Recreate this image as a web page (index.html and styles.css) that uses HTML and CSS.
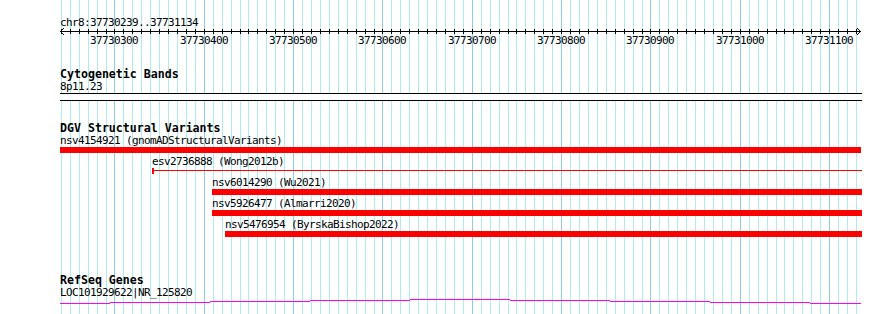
FILE: index.html
```html
<!DOCTYPE html>
<html lang="en">
  <head>
    <meta charset="UTF-8" />
    <title>chr8:37730239..37731134</title>
    <link rel="stylesheet" href="styles.css">
  </head>
  <body>
    <div class="browser">
      <!-- 10 bp grid, drawn behind the tracks -->
      <svg class="grid" width="890" height="314" viewBox="0 0 890 314" shape-rendering="crispEdges">
        <path class="grid-minor" d="M61.5 0V314M70.5 0V314M79.5 0V314M88.5 0V314M97.5 0V314M106.5 0V314M123.5 0V314M132.5 0V314M141.5 0V314M150.5 0V314M159.5 0V314M168.5 0V314M177.5 0V314M186.5 0V314M195.5 0V314M213.5 0V314M222.5 0V314M231.5 0V314M240.5 0V314M248.5 0V314M257.5 0V314M266.5 0V314M275.5 0V314M284.5 0V314M302.5 0V314M311.5 0V314M320.5 0V314M329.5 0V314M338.5 0V314M347.5 0V314M356.5 0V314M365.5 0V314M374.5 0V314M391.5 0V314M400.5 0V314M409.5 0V314M418.5 0V314M427.5 0V314M436.5 0V314M445.5 0V314M454.5 0V314M463.5 0V314M481.5 0V314M490.5 0V314M499.5 0V314M508.5 0V314M516.5 0V314M525.5 0V314M534.5 0V314M543.5 0V314M552.5 0V314M570.5 0V314M579.5 0V314M588.5 0V314M597.5 0V314M606.5 0V314M615.5 0V314M624.5 0V314M633.5 0V314M642.5 0V314M659.5 0V314M668.5 0V314M677.5 0V314M686.5 0V314M695.5 0V314M704.5 0V314M713.5 0V314M722.5 0V314M731.5 0V314M749.5 0V314M758.5 0V314M767.5 0V314M776.5 0V314M784.5 0V314M793.5 0V314M802.5 0V314M811.5 0V314M820.5 0V314M838.5 0V314M847.5 0V314M856.5 0V314"/>
        <path class="grid-major" d="M114.5 0V314M204.5 0V314M293.5 0V314M382.5 0V314M472.5 0V314M561.5 0V314M650.5 0V314M740.5 0V314M829.5 0V314"/>
      </svg>

      <div class="tracks">
        <section class="ruler">
          <div class="small chrom">chr8:37730239..37731134</div>
          <svg class="axis" width="802" height="5" viewBox="60 29 802 5" shape-rendering="crispEdges">
            <path d="M60 31.5H861"/>
            <path d="M61.5 29v5M70.5 29v5M79.5 29v5M88.5 29v5M97.5 29v5M106.5 29v5M114.5 29v5M123.5 29v5M132.5 29v5M141.5 29v5M150.5 29v5M159.5 29v5M168.5 29v5M177.5 29v5M186.5 29v5M195.5 29v5M204.5 29v5M213.5 29v5M222.5 29v5M231.5 29v5M240.5 29v5M248.5 29v5M257.5 29v5M266.5 29v5M275.5 29v5M284.5 29v5M293.5 29v5M302.5 29v5M311.5 29v5M320.5 29v5M329.5 29v5M338.5 29v5M347.5 29v5M356.5 29v5M365.5 29v5M374.5 29v5M382.5 29v5M391.5 29v5M400.5 29v5M409.5 29v5M418.5 29v5M427.5 29v5M436.5 29v5M445.5 29v5M454.5 29v5M463.5 29v5M472.5 29v5M481.5 29v5M490.5 29v5M499.5 29v5M508.5 29v5M516.5 29v5M525.5 29v5M534.5 29v5M543.5 29v5M552.5 29v5M561.5 29v5M570.5 29v5M579.5 29v5M588.5 29v5M597.5 29v5M606.5 29v5M615.5 29v5M624.5 29v5M633.5 29v5M642.5 29v5M650.5 29v5M659.5 29v5M668.5 29v5M677.5 29v5M686.5 29v5M695.5 29v5M704.5 29v5M713.5 29v5M722.5 29v5M731.5 29v5M740.5 29v5M749.5 29v5M758.5 29v5M767.5 29v5M776.5 29v5M784.5 29v5M793.5 29v5M802.5 29v5M811.5 29v5M820.5 29v5M829.5 29v5M838.5 29v5M847.5 29v5M856.5 29v5"/>
            <path class="arrow" d="M64 28 60.5 31.5 64 35M857 28 860.5 31.5 857 35"/>
          </svg>
          <div class="small tick-labels">
            <span style="left: 30px">37730300</span>
            <span style="left: 120px">37730400</span>
            <span style="left: 209px">37730500</span>
            <span style="left: 298px">37730600</span>
            <span style="left: 388px">37730700</span>
            <span style="left: 477px">37730800</span>
            <span style="left: 566px">37730900</span>
            <span style="left: 656px">37731000</span>
            <span style="left: 745px">37731100</span>
          </div>
        </section>

        <section class="track cyto">
          <h2 class="track-title">Cytogenetic Bands</h2>
          <div class="small">8p11.23</div>
          <div class="ideogram"></div>
        </section>

        <section class="track dgv">
          <h2 class="track-title">DGV Structural Variants</h2>
          <div class="feature" style="margin-left: 0; margin-right: 1px">
            <div class="small">nsv4154921 (gnomADStructuralVariants)</div>
            <div class="bar"></div>
          </div>
          <div class="feature" style="margin-left: 92px">
            <div class="small">esv2736888 (Wong2012b)</div>
            <div class="span-line"></div>
          </div>
          <div class="feature" style="margin-left: 152px">
            <div class="small">nsv6014290 (Wu2021)</div>
            <div class="bar"></div>
          </div>
          <div class="feature" style="margin-left: 152px">
            <div class="small">nsv5926477 (Almarri2020)</div>
            <div class="bar"></div>
          </div>
          <div class="feature" style="margin-left: 165px">
            <div class="small">nsv5476954 (ByrskaBishop2022)</div>
            <div class="bar"></div>
          </div>
        </section>

        <section class="track refseq">
          <h2 class="track-title">RefSeq Genes</h2>
          <div class="small">LOC101929622|NR_125820</div>
          <svg class="gene" width="802" height="6" viewBox="60 299 802 6" shape-rendering="crispEdges">
            <path d="M60 303.5H110M110 302.5H210M210 301.5H310M310 300.5H410M410 299.5H510M510 300.5H610M610 301.5H710M710 302.5H810M810 303.5H861"/>
          </svg>
        </section>
      </div>
    </div>
  </body>
</html>
```

FILE: styles.css
```css
* {
  box-sizing: border-box;
}
body {
  margin: 0;
  background: #fff;
  color: #000;
  font-family: "DejaVu Sans Mono", "Liberation Mono", monospace;
}
.browser {
  position: relative;
  width: 890px;
  height: 314px;
  overflow: hidden;
}
.grid {
  position: absolute;
  left: 0;
  top: 0;
}
.grid-minor {
  stroke: #aeeaf0;
  stroke-width: 1;
}
.grid-major {
  stroke: #8ecbe8;
  stroke-width: 1;
}
.tracks {
  position: relative;
  width: 862px;
  padding-left: 60px;
}
.small {
  font-size: 11px;
  line-height: 13px;
  letter-spacing: -0.62px;
  white-space: nowrap;
}
.chrom {
  padding-top: 16px;
}
.axis {
  display: block;
  overflow: visible;
}
.axis path {
  stroke: #000;
  stroke-width: 1;
  fill: none;
}
.axis .arrow {
  shape-rendering: auto;
}
.tick-labels {
  position: relative;
  height: 13px;
}
.tick-labels span {
  position: absolute;
  top: 0;
}
.track-title {
  margin: 0;
  font-size: 11.6px;
  line-height: 12px;
  font-weight: bold;
  white-space: nowrap;
}
.cyto {
  margin-top: 21px;
}
.ideogram {
  height: 8px;
  border-top: 1px solid #000;
  border-bottom: 1px solid #000;
  background: #fff;
}
.dgv {
  margin-top: 21px;
}
.feature {
  height: 21px;
}
.bar {
  height: 6px;
  background: #f00;
}
.span-line {
  height: 6px;
  border-left: 2px solid #f00;
  background: linear-gradient(#f00, #f00) 0 2px / 100% 1px no-repeat;
}
.refseq {
  margin-top: 35px;
}
.gene {
  display: block;
}
.gene path {
  stroke: #f0f;
  stroke-width: 1;
  fill: none;
}
```
